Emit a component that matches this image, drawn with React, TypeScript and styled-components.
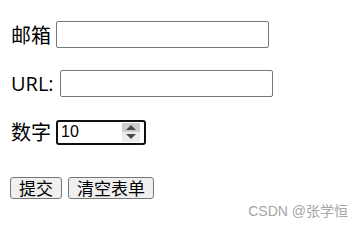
import React, { ReactElement } from "react";
import styled, { createGlobalStyle } from "styled-components";

const GlobalStyle = createGlobalStyle`
  html, body {
    margin: 0;
    padding: 0;
    background: #ffffff;
  }
  body {
    font-family: "Noto Sans CJK SC", "Noto Sans", sans-serif;
    color: #000000;
  }
`;

export default function App(): ReactElement {
  return (
    <SPage>
      <GlobalStyle />
      <SForm onSubmit={(e) => e.preventDefault()}>
        <SRow>
          <SLabel>邮箱</SLabel>
          <STextInput type="email" />
        </SRow>
        <SRow>
          <SLabel $latin>URL:</SLabel>
          <STextInput type="url" $offset={1} />
        </SRow>
        <SRow $height={26} $top={1}>
          <SLabel>数字</SLabel>
          <SNumberBox>
            <SNumberInput type="text" defaultValue="10" />
            <SSpinner>
              <SSpinHalf $up>
                <STriangle $up />
              </SSpinHalf>
              <SSpinHalf>
                <STriangle />
              </SSpinHalf>
            </SSpinner>
          </SNumberBox>
        </SRow>
        <SRow $top={8}>
          <SButton type="submit">提交</SButton>
          <SButton type="reset">清空表单</SButton>
        </SRow>
      </SForm>
      <SWatermark>CSDN @张学恒</SWatermark>
    </SPage>
  );
}

const SPage = styled.div`
  position: relative;
  width: 363px;
  height: 228px;
  overflow: hidden;
`;

const SForm = styled.form`
  display: flex;
  flex-direction: column;
  gap: 20px;
  padding: 20px 0 0 10px;
`;

const SRow = styled.div<{ $height?: number; $top?: number }>`
  display: flex;
  align-items: center;
  height: ${({ $height }) => $height ?? 29}px;
  margin-top: ${({ $top }) => $top ?? 0}px;
  gap: 6px;
`;

const SLabel = styled.label<{ $latin?: boolean }>`
  font-size: 20px;
  line-height: 1;
  font-family: ${({ $latin }) =>
    $latin
      ? `"Open Sans", "Noto Sans", sans-serif`
      : `"Noto Sans CJK SC", sans-serif`};
  margin-left: 1px;
  margin-right: -1px;
`;

const STextInput = styled.input<{ $offset?: number }>`
  box-sizing: border-box;
  width: 213px;
  height: 27px;
  border: 1px solid #767676;
  border-radius: 2px;
  padding: 0 3px;
  margin-left: ${({ $offset }) => $offset ?? 0}px;
  font-size: 16px;
  background: #ffffff;
  outline: none;
`;

const SNumberBox = styled.div`
  box-sizing: border-box;
  display: flex;
  align-items: center;
  width: 90px;
  height: 25px;
  border: 2px solid #101010;
  border-radius: 3px;
  padding: 0 4px 0 3px;
  background: #ffffff;
`;

const SNumberInput = styled.input`
  flex: 1;
  min-width: 0;
  border: none;
  outline: none;
  padding: 0;
  font-family: "Liberation Sans", Arial, sans-serif;
  font-size: 16px;
  color: #000000;
  background: transparent;
`;

const SSpinner = styled.div`
  display: flex;
  flex-direction: column;
  width: 18px;
  height: 19px;
`;

const SSpinHalf = styled.div<{ $up?: boolean }>`
  flex: 1;
  display: flex;
  align-items: center;
  justify-content: center;
  background: ${({ $up }) => ($up ? "#cdcdcd" : "#ececec")};
`;

const STriangle = styled.span<{ $up?: boolean }>`
  width: 0;
  height: 0;
  border-left: 5px solid transparent;
  border-right: 5px solid transparent;
  ${({ $up }) =>
    $up ? "border-bottom: 5px solid #4a4a4a;" : "border-top: 5px solid #4a4a4a;"}
`;

const SButton = styled.button`
  box-sizing: border-box;
  height: 22px;
  padding: 0 8px;
  border: 1px solid #767676;
  border-radius: 3px;
  background: #efefef;
  font-family: "Noto Sans CJK SC", sans-serif;
  font-size: 17px;
  line-height: 1;
  color: #000000;
`;

const SWatermark = styled.div`
  position: absolute;
  right: 15px;
  bottom: 8px;
  font-family: "Liberation Sans", "Noto Sans CJK SC", sans-serif;
  font-size: 14px;
  color: #a6a6a6;
`;
